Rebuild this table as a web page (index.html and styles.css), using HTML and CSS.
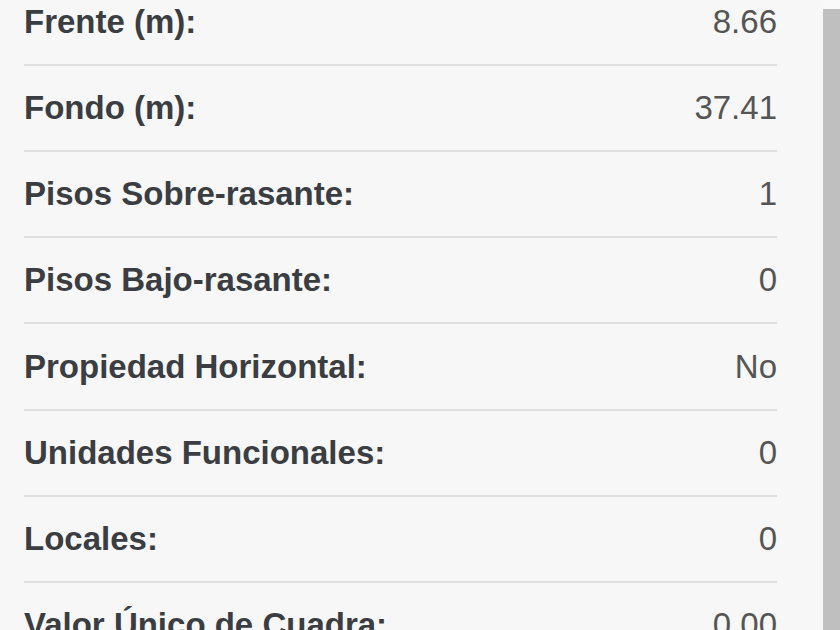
FILE: index.html
```html
<!DOCTYPE html>
<html lang="es">
<head>
<meta charset="utf-8">
<title>Datos de parcela</title>
<link rel="stylesheet" href="styles.css">
</head>
<body>
<div class="page">
  <div class="panel">
    <div class="list">
      <div class="row"><span class="label">Frente (m):</span><span class="value">8.66</span></div>
      <div class="row"><span class="label">Fondo (m):</span><span class="value">37.41</span></div>
      <div class="row"><span class="label">Pisos Sobre-rasante:</span><span class="value">1</span></div>
      <div class="row"><span class="label">Pisos Bajo-rasante:</span><span class="value">0</span></div>
      <div class="row"><span class="label">Propiedad Horizontal:</span><span class="value">No</span></div>
      <div class="row"><span class="label">Unidades Funcionales:</span><span class="value">0</span></div>
      <div class="row"><span class="label">Locales:</span><span class="value">0</span></div>
      <div class="row"><span class="label">Valor Único de Cuadra:</span><span class="value">0.00</span></div>
    </div>
  </div>
  <div class="scrollbar"><div class="thumb"></div></div>
</div>
</body>
</html>
```
FILE: styles.css
```css
html, body {
  margin: 0;
  padding: 0;
  background: #f7f7f7;
  overflow: hidden;
}
.page {
  display: flex;
  width: 840px;
  height: 630px;
  overflow: hidden;
}
.panel {
  flex: 1;
  padding: 0 46px 0 24px;
  overflow: hidden;
}
.list {
  margin-top: -20.17px;
}
.row {
  display: flex;
  justify-content: space-between;
  align-items: center;
  height: 84.17px;
  border-bottom: 2px solid #e0e0e0;
  font-family: "Liberation Sans", Arial, sans-serif;
  font-size: 33px;
}
.label {
  font-weight: bold;
  color: #3a3d42;
}
.value {
  color: #555;
}
.scrollbar {
  width: 17px;
  flex: none;
  padding-top: 9px;
  background: #f9f9f9;
  display: flex;
  flex-direction: column;
}
.thumb {
  flex: 1;
  background: #bfbfbf;
}
```
